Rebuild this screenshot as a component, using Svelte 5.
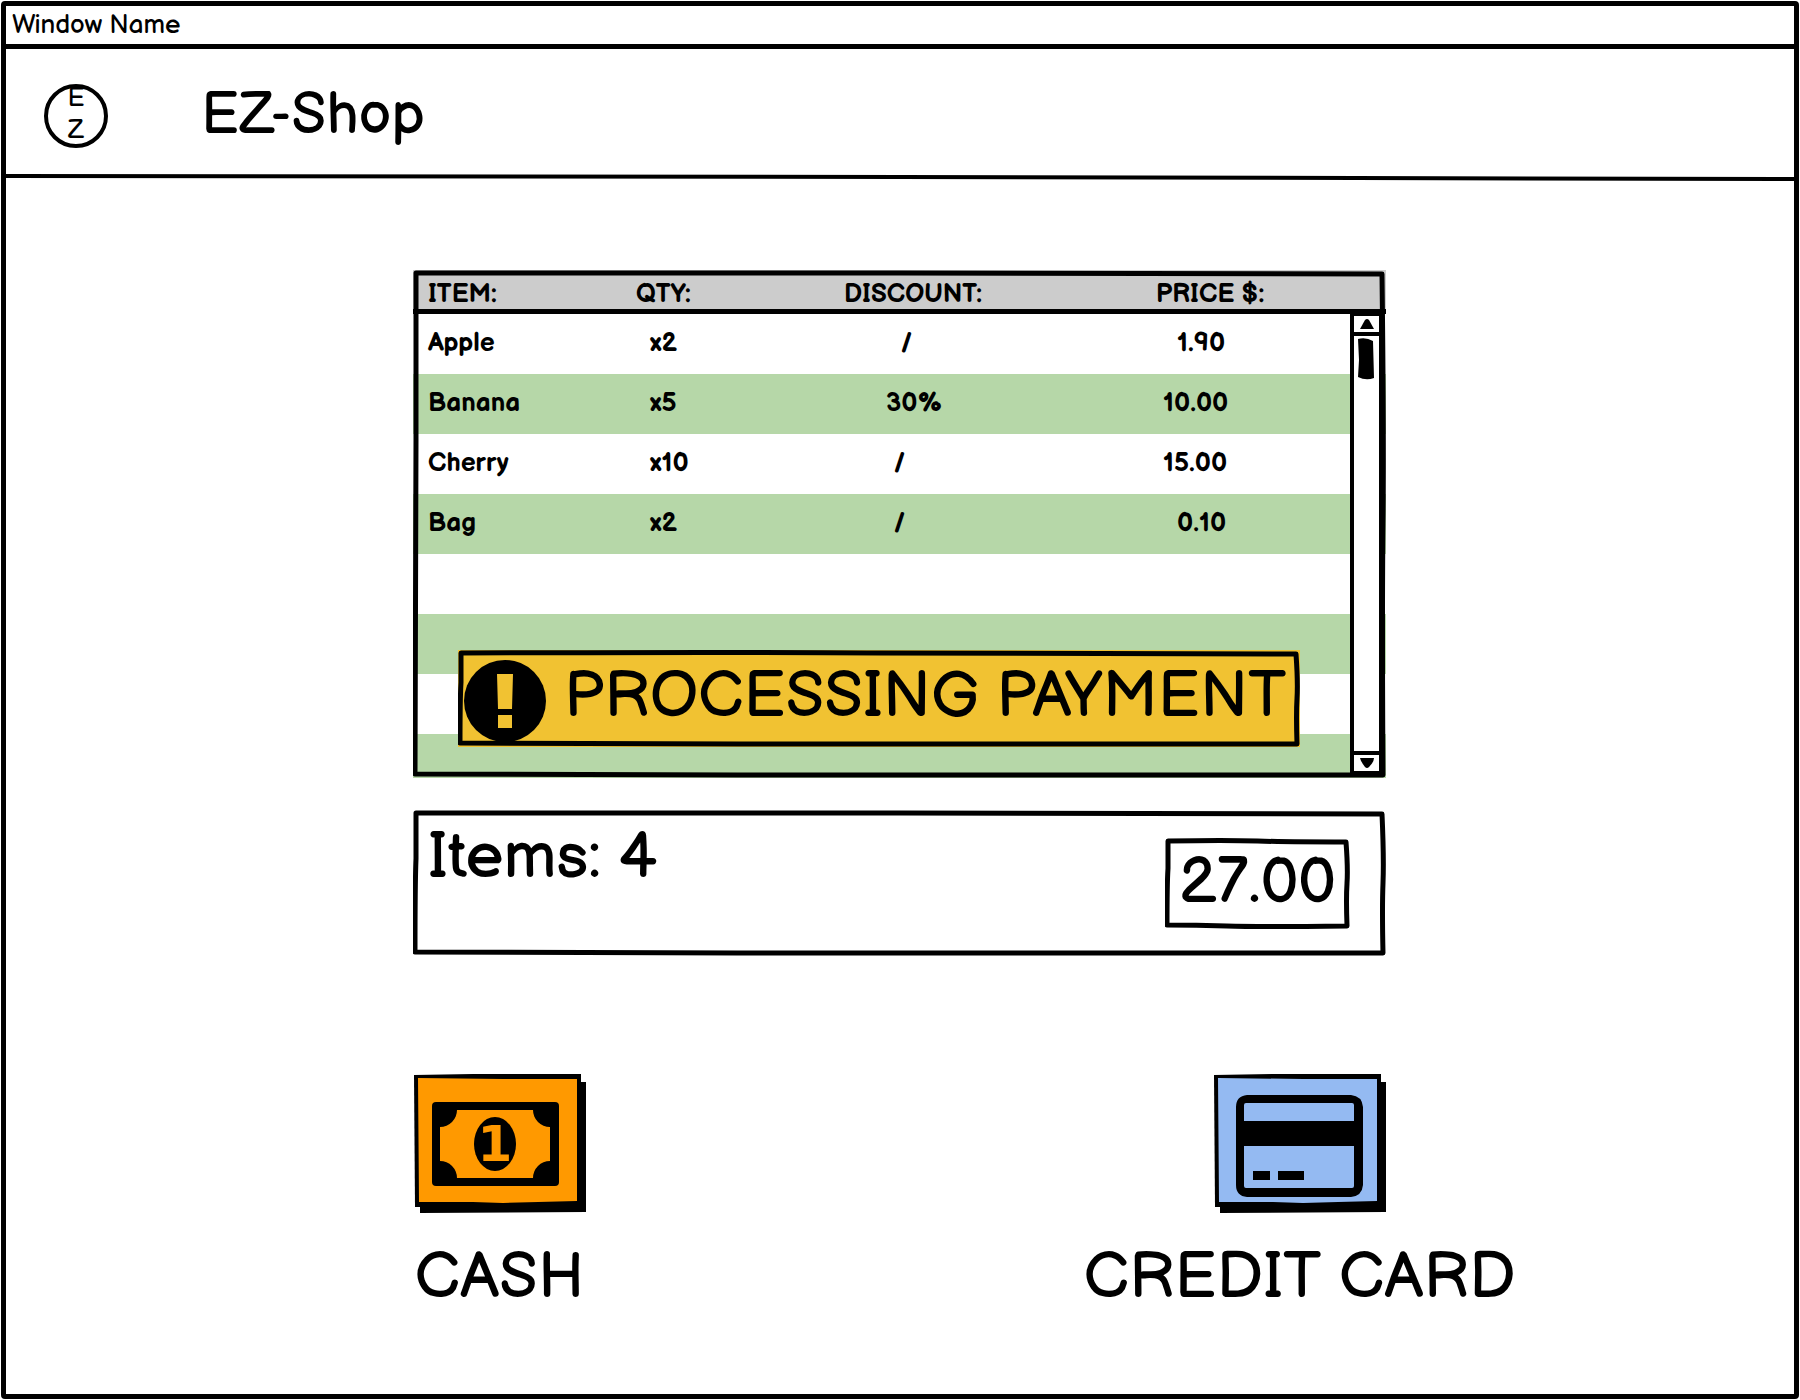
<script>
  const rows = [
    { item: 'Apple', qty: 'x2', discount: '/', discountPad: 8, price: '1.90', pricePad: 3 },
    { item: 'Banana', qty: 'x5', discount: '30%', discountPad: 6, price: '10.00', pricePad: 1 },
    { item: 'Cherry', qty: 'x10', discount: '/', discountPad: 7, price: '15.00', pricePad: 1 },
    { item: 'Bag', qty: 'x2', discount: '/', discountPad: 7, price: '0.10', pricePad: 3 }
  ];
  const emptyRows = [1, 2, 3, 4];

  const pad = (n, text) => ' '.repeat(n) + text;

  // A slightly uneven rectangle, as if drawn with a marker.
  const sketch = (w, h) =>
    `M3 3 Q${w / 3} 2 ${w / 2} 3 T${w - 4} 4 Q${w - 2} ${h / 3} ${w - 3} ${h / 2} T${w - 3} ${h - 3} ` +
    `Q${w / 2} ${h - 2} ${w / 3} ${h - 3} T2 ${h - 4} Q2 ${h / 2} 3 ${h / 3} Z`;
</script>

{#snippet frame(w, h)}
  <svg class="frame" viewBox="0 0 {w} {h}" preserveAspectRatio="none" aria-hidden="true">
    <path d={sketch(w, h)} />
  </svg>
{/snippet}

{#snippet tile()}
  <path d="M7 8H173V138L7 139Z" fill="#000" />
  <path d="M1 1L60 0H168V128L164 133H2Z" fill="#000" />
  <path class="face" d="M5 4L90 5H164V127L125 128L90 129L60 128H6Z" />
{/snippet}

<div class="window">
  <div class="titlebar">Window Name</div>
  <header>
    <div class="logo"><span>E</span><span>Z</span></div>
    <h1>EZ-Shop</h1>
    <svg class="rule" viewBox="0 0 1788 6" preserveAspectRatio="none" aria-hidden="true">
      <path d="M0 3Q300 4 894 4T1788 6" />
    </svg>
  </header>

  <main>
    <section class="list">
      <table>
        <thead>
          <tr>
            <th class="item">ITEM:</th>
            <th class="qty">QTY:</th>
            <th class="discount">DISCOUNT:</th>
            <th>PRICE $:</th>
          </tr>
        </thead>
        <tbody>
          {#each rows as row}
            <tr>
              <td>{row.item}</td>
              <td class="count">{row.qty}</td>
              <td>{pad(row.discountPad, row.discount)}</td>
              <td>{pad(row.pricePad, row.price)}</td>
            </tr>
          {/each}
          {#each emptyRows as n (n)}
            <tr><td colspan="4"></td></tr>
          {/each}
        </tbody>
      </table>

      <div class="scrollbar">
        <button type="button" class="up" aria-label="Scroll up">
          <svg width="16" height="12" viewBox="0 0 16 12"><path d="M1 11L6 2Q8 0 10 2L15 11Z" /></svg>
        </button>
        <div class="track">
          <svg width="16" height="42" viewBox="0 0 16 42"><path d="M0 1Q8 -1 15 3L16 40Q8 43 0 39L1 22Z" /></svg>
        </div>
        <button type="button" class="down" aria-label="Scroll down">
          <svg width="16" height="12" viewBox="0 0 16 12"><path d="M1 1H15Q15 5 10 10Q8 12 6 10Q2 5 1 1Z" /></svg>
        </button>
      </div>

      {@render frame(973, 508)}

      <div class="banner" role="status">
        <svg class="alert" width="84" height="84" viewBox="0 0 84 84" aria-hidden="true">
          <circle cx="42" cy="42" r="41" />
          <path d="M34 15H50L49 50H35ZM35 56H49V69H35Z" fill="#f1c232" />
        </svg>
        <span>PROCESSING PAYMENT</span>
        {@render frame(842, 97)}
      </div>
    </section>

    <section class="summary">
      <p>Items: 4</p>
      <output class="total">27.00{@render frame(185, 91)}</output>
      {@render frame(973, 146)}
    </section>

    <section class="methods">
      <div class="method">
        <button type="button" class="cash" aria-labelledby="cash-label">
          <svg width="173" height="139" viewBox="0 0 173 139" aria-hidden="true">
            {@render tile()}
            <rect x="19" y="28" width="127" height="84" rx="4" />
            <path
              class="face"
              d="M44 36H120A17 17 0 0 0 137 53V87A17 17 0 0 0 120 104H44A17 17 0 0 0 27 87V53A17 17 0 0 0 44 36Z"
            />
            <ellipse cx="82" cy="70" rx="21" ry="27" />
            <text class="face" x="82" y="87" text-anchor="middle">1</text>
          </svg>
        </button>
        <span id="cash-label">CASH</span>
      </div>
      <div class="method">
        <button type="button" class="card" aria-labelledby="card-label">
          <svg width="173" height="139" viewBox="0 0 173 139" aria-hidden="true">
            {@render tile()}
            <path
              fill-rule="evenodd"
              d="M34 21H138Q149 22 150 33V111Q149 122 138 123H34Q23 122 23 111V33Q23 22 34 21ZM33 29Q31 29 31 31V47H141V31Q141 29 139 29ZM31 72V112Q31 114 33 114H139Q141 114 141 112V72Z"
            />
            <path d="M40 97H57V106H40ZM65 97H91V106H65Z" />
          </svg>
        </button>
        <span id="card-label">CREDIT CARD</span>
      </div>
    </section>
  </main>
</div>

<style>
  :global(body) {
    display: flow-root;
    background: #fff;
  }

  .window {
    box-sizing: border-box;
    min-height: calc(100vh - 2px);
    margin: 1px;
    border: 5px solid #000;
    border-radius: 4px;
    color: #000;
    font-family: 'Balsamiq Sans', Lato, sans-serif;
    font-weight: 500;
  }

  .titlebar {
    padding: 2px 6px 0;
    border-bottom: 5px solid #000;
    font-size: 26px;
    line-height: 36px;
  }

  header {
    position: relative;
    display: flex;
    align-items: center;
    gap: 93px;
    height: 126px;
    padding: 0 0 4px 38px;
  }

  .rule {
    position: absolute;
    bottom: 0;
    left: 0;
    width: 100%;
    height: 6px;
    overflow: visible;
  }

  .rule path {
    fill: none;
    stroke: #000;
    stroke-width: 4px;
    vector-effect: non-scaling-stroke;
  }

  .logo {
    display: flex;
    flex-direction: column;
    align-items: center;
    box-sizing: border-box;
    width: 64px;
    height: 64px;
    margin-top: 8px;
    border: 4px solid #000;
    border-radius: 50%;
    font-size: 26px;
    line-height: 32px;
  }

  .logo span {
    margin-top: -5px;
    margin-bottom: 5px;
  }

  h1 {
    margin: 8px 0 0;
    font-size: 58px;
    font-weight: 500;
    line-height: 64px;
  }

  main {
    max-width: 973px;
    margin: 0 auto;
    padding: 91px 1px 60px 0;
  }

  .list,
  .summary,
  .banner,
  .total {
    position: relative;
  }

  .frame {
    position: absolute;
    inset: 0;
    width: 100%;
    height: 100%;
    pointer-events: none;
  }

  .frame path {
    fill: none;
    stroke: #000;
    stroke-width: 5px;
    stroke-linejoin: round;
    vector-effect: non-scaling-stroke;
  }

  table {
    width: 100%;
    border-collapse: separate;
    border-spacing: 0;
    table-layout: fixed;
    font-size: 26px;
    font-weight: 700;
    line-height: 32px;
    white-space: pre;
  }

  th,
  td {
    padding: 0 0 0 15px;
    text-align: left;
  }

  th {
    box-sizing: border-box;
    height: 44px;
    padding-top: 11px;
    border-bottom: 5px solid #000;
    background: #ccc;
    font-weight: 700;
    line-height: 28px;
  }

  .item {
    width: 208px;
  }

  .qty {
    width: 208px;
  }

  .discount {
    width: 312px;
  }

  .count {
    padding-left: 29px;
  }

  tbody tr {
    height: 60px;
  }

  tbody tr:nth-child(even) {
    background: #b6d7a8;
  }

  tbody tr:last-child {
    height: 44px;
  }

  .scrollbar {
    position: absolute;
    top: 44px;
    right: 3px;
    bottom: 5px;
    display: flex;
    flex-direction: column;
    width: 25px;
    border-right: 4px solid #000;
    border-left: 4px solid #000;
    background: #fff;
  }

  button {
    padding: 0;
    border: 0;
    background: none;
    cursor: pointer;
  }

  button svg {
    display: block;
  }

  .scrollbar button {
    display: flex;
    justify-content: center;
    align-items: center;
    height: 22px;
  }

  .scrollbar .up {
    border-top: 2px solid #000;
    border-bottom: 4px solid #000;
  }

  .scrollbar .down {
    border-top: 4px solid #000;
    border-bottom: 2px solid #000;
  }

  .track {
    flex: 1;
    padding: 2px 4px;
  }

  .banner {
    position: absolute;
    right: 86px;
    bottom: 31px;
    left: 45px;
    display: flex;
    gap: 17px;
    box-sizing: border-box;
    height: 97px;
    padding: 9px 5px;
    background: #f1c232;
    font-size: 64px;
    line-height: 76px;
    white-space: nowrap;
  }

  .alert {
    flex: none;
  }

  .summary {
    display: flex;
    justify-content: space-between;
    align-items: flex-start;
    box-sizing: border-box;
    min-height: 146px;
    margin-top: 32px;
    padding: 0 36px 0 15px;
    font-size: 64px;
    line-height: 80px;
  }

  p {
    margin: 8px 0 0;
  }

  .total {
    box-sizing: border-box;
    min-width: 185px;
    height: 91px;
    margin-top: 28px;
    padding-top: 5px;
    text-align: center;
  }

  .methods {
    display: flex;
    justify-content: space-between;
    margin-top: 118px;
  }

  .method {
    display: flex;
    flex-direction: column;
    align-items: center;
    gap: 25px;
    width: 173px;
    font-size: 64px;
    line-height: 80px;
    white-space: nowrap;
  }

  .cash .face {
    fill: #ff9900;
  }

  .card .face {
    fill: #94baf2;
  }

  .cash text {
    font: 700 50px 'DejaVu Sans', sans-serif;
  }
</style>
